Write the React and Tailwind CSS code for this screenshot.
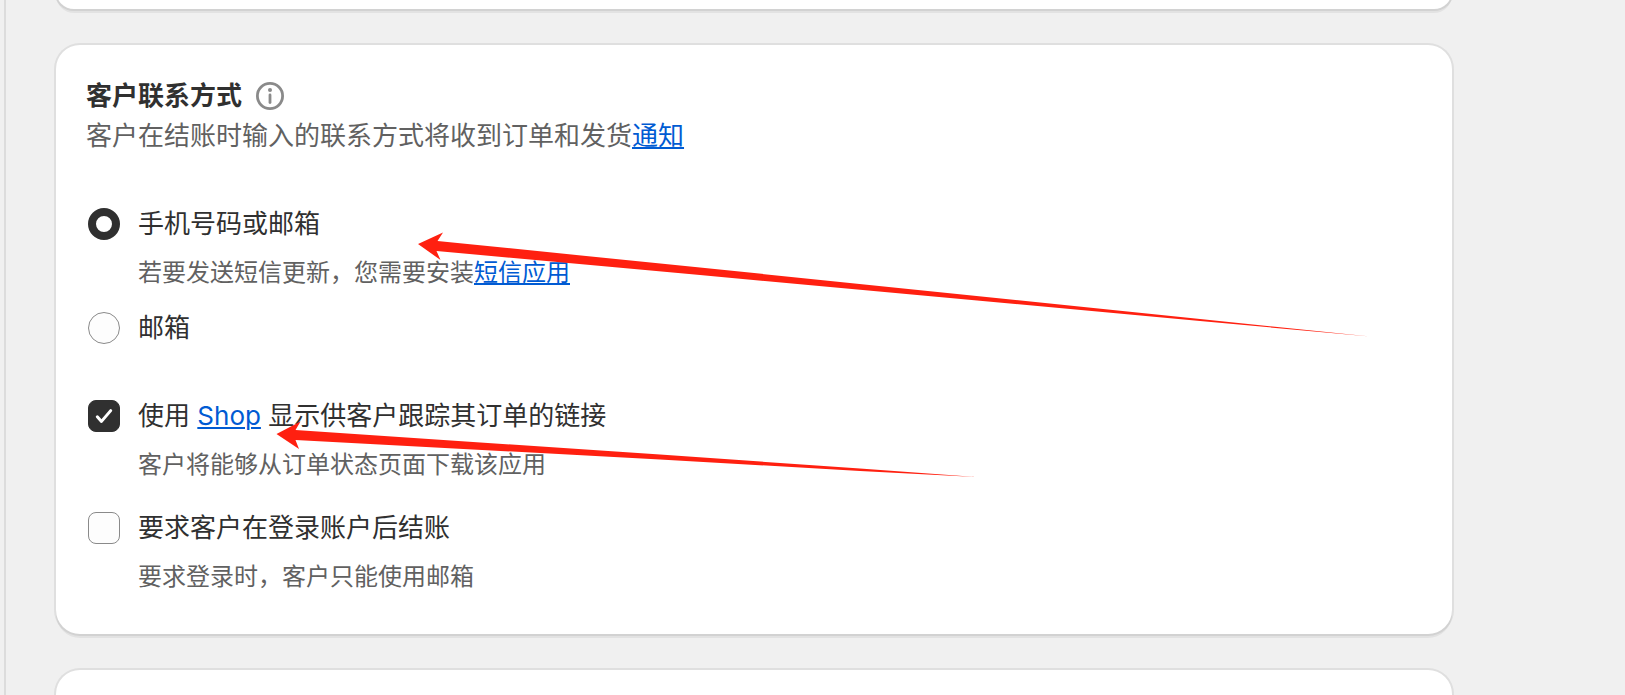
import React from "react";
import { useState } from "react";

const cardClass =
  "bg-white rounded-3xl shadow-[0_0_0_2px_#00000012,0_4px_0_0_#0000000e]";

const linkClass =
  "text-[#005bd3] underline decoration-2 underline-offset-2 hover:text-blue-900";

const InfoIcon = () => {
  return (
    <svg width="28" height="28" viewBox="0 0 28 28" fill="none">
      <circle cx="14" cy="14" r="12.6" stroke="#8a8a8a" strokeWidth="2.8" />
      <circle cx="14" cy="8" r="2" fill="#8a8a8a" />
      <path
        d="M14 13v7.5"
        stroke="#8a8a8a"
        strokeWidth="2.8"
        strokeLinecap="round"
      />
    </svg>
  );
};

const RadioOption = ({ id, name, value, checked, onChange, label }) => {
  return (
    <div className="flex items-center gap-[18px] h-10">
      <input
        type="radio"
        id={id}
        name={name}
        value={value}
        checked={checked}
        onChange={onChange}
        className="appearance-none shrink-0 size-8 rounded-full border border-[#8a8a8a] bg-[#fdfdfd] checked:border-8 checked:border-[#303030] checked:bg-white"
      />
      <label htmlFor={id}>{label}</label>
    </div>
  );
};

const CheckboxOption = ({ id, name, checked, onChange, children }) => {
  return (
    <div className="flex items-center gap-[18px] h-10">
      <span className="grid shrink-0 size-8">
        <input
          type="checkbox"
          id={id}
          name={name}
          checked={checked}
          onChange={onChange}
          className="peer col-start-1 row-start-1 appearance-none size-8 rounded-lg border border-[#8a8a8a] bg-[#fdfdfd] checked:border-[#303030] checked:bg-[#303030]"
        />
        <svg
          className="col-start-1 row-start-1 pointer-events-none hidden peer-checked:block"
          width="32"
          height="32"
          viewBox="0 0 32 32"
          fill="none"
        >
          <path
            d="M9.3 16.8l4.2 4.6L22.7 10.6"
            stroke="#fff"
            strokeWidth="3"
            strokeLinecap="round"
            strokeLinejoin="round"
          />
        </svg>
      </span>
      <label htmlFor={id}>{children}</label>
    </div>
  );
};

const HelpText = ({ children }) => {
  return (
    <p className="mt-[9px] pl-[50px] text-2xl leading-10 text-[#616161]">
      {children}
    </p>
  );
};

// red arrows pointing at the recommended options
const Arrows = () => {
  return (
    <svg
      className="absolute left-0 top-0 pointer-events-none"
      width="1400"
      height="588"
      viewBox="56 45 1400 588"
      fill="#ff2010"
    >
      <path d="M418 244L443 232.5L437.5 241L700 267.5L1200 319L1370 336.5L1200 321L700 275L436.5 251L440.5 260Z" />
      <path d="M276.5 434L300.5 421.5L295.5 430L660 454.5L860 468.5L976 477L860 471L660 459.5L295.5 440L299 449Z" />
    </svg>
  );
};

const App = () => {
  const [settings, setSettings] = useState({
    contactMethod: "PHONE_OR_EMAIL",
    showShopLink: true,
    requireLogin: false,
  });

  const handleChange = (e) => {
    const { name, type, value, checked } = e.target;
    setSettings({
      ...settings,
      [name]: type === "checkbox" ? checked : value,
    });
  };

  return (
    <div className="h-screen overflow-hidden bg-[#f0f0f0] pl-1 font-['Inter','Noto_Sans_CJK_SC',sans-serif] text-[26px] leading-10 text-[#303030]">
      <main className="flex flex-col gap-9 min-h-full border-l-2 border-[#dcdcdc] pl-[50px] pr-[173px]">
        <section className={`${cardClass} h-9 -mt-[27px] shrink-0`} />

        <section
          className={`${cardClass} relative shrink-0 px-[30px] pt-[31px] pb-[37px]`}
        >
          <div className="flex items-center gap-3.5">
            <h2 className="font-bold">客户联系方式</h2>
            <button type="button" aria-label="客户联系方式">
              <InfoIcon />
            </button>
          </div>
          <p className="text-[#616161]">
            客户在结账时输入的联系方式将收到订单和发货
            <a href="#notifications" className={linkClass}>
              通知
            </a>
          </p>

          <form className="mt-12 pl-0.5">
            <RadioOption
              id="phoneOrEmail"
              name="contactMethod"
              value="PHONE_OR_EMAIL"
              checked={settings.contactMethod === "PHONE_OR_EMAIL"}
              onChange={handleChange}
              label="手机号码或邮箱"
            />
            <HelpText>
              若要发送短信更新，您需要安装
              <a href="#sms" className={linkClass}>
                短信应用
              </a>
            </HelpText>
            <div className="mt-[15px]">
              <RadioOption
                id="email"
                name="contactMethod"
                value="EMAIL"
                checked={settings.contactMethod === "EMAIL"}
                onChange={handleChange}
                label="邮箱"
              />
            </div>

            <div className="mt-12">
              <CheckboxOption
                id="showShopLink"
                name="showShopLink"
                checked={settings.showShopLink}
                onChange={handleChange}
              >
                使用{" "}
                <a href="#shop" className={linkClass}>
                  Shop
                </a>{" "}
                显示供客户跟踪其订单的链接
              </CheckboxOption>
              <HelpText>客户将能够从订单状态页面下载该应用</HelpText>
            </div>

            <div className="mt-[23px]">
              <CheckboxOption
                id="requireLogin"
                name="requireLogin"
                checked={settings.requireLogin}
                onChange={handleChange}
              >
                要求客户在登录账户后结账
              </CheckboxOption>
              <HelpText>要求登录时，客户只能使用邮箱</HelpText>
            </div>
          </form>

          <Arrows />
        </section>

        <section className={`${cardClass} h-40 shrink-0`} />
      </main>
    </div>
  );
};

export default App;
